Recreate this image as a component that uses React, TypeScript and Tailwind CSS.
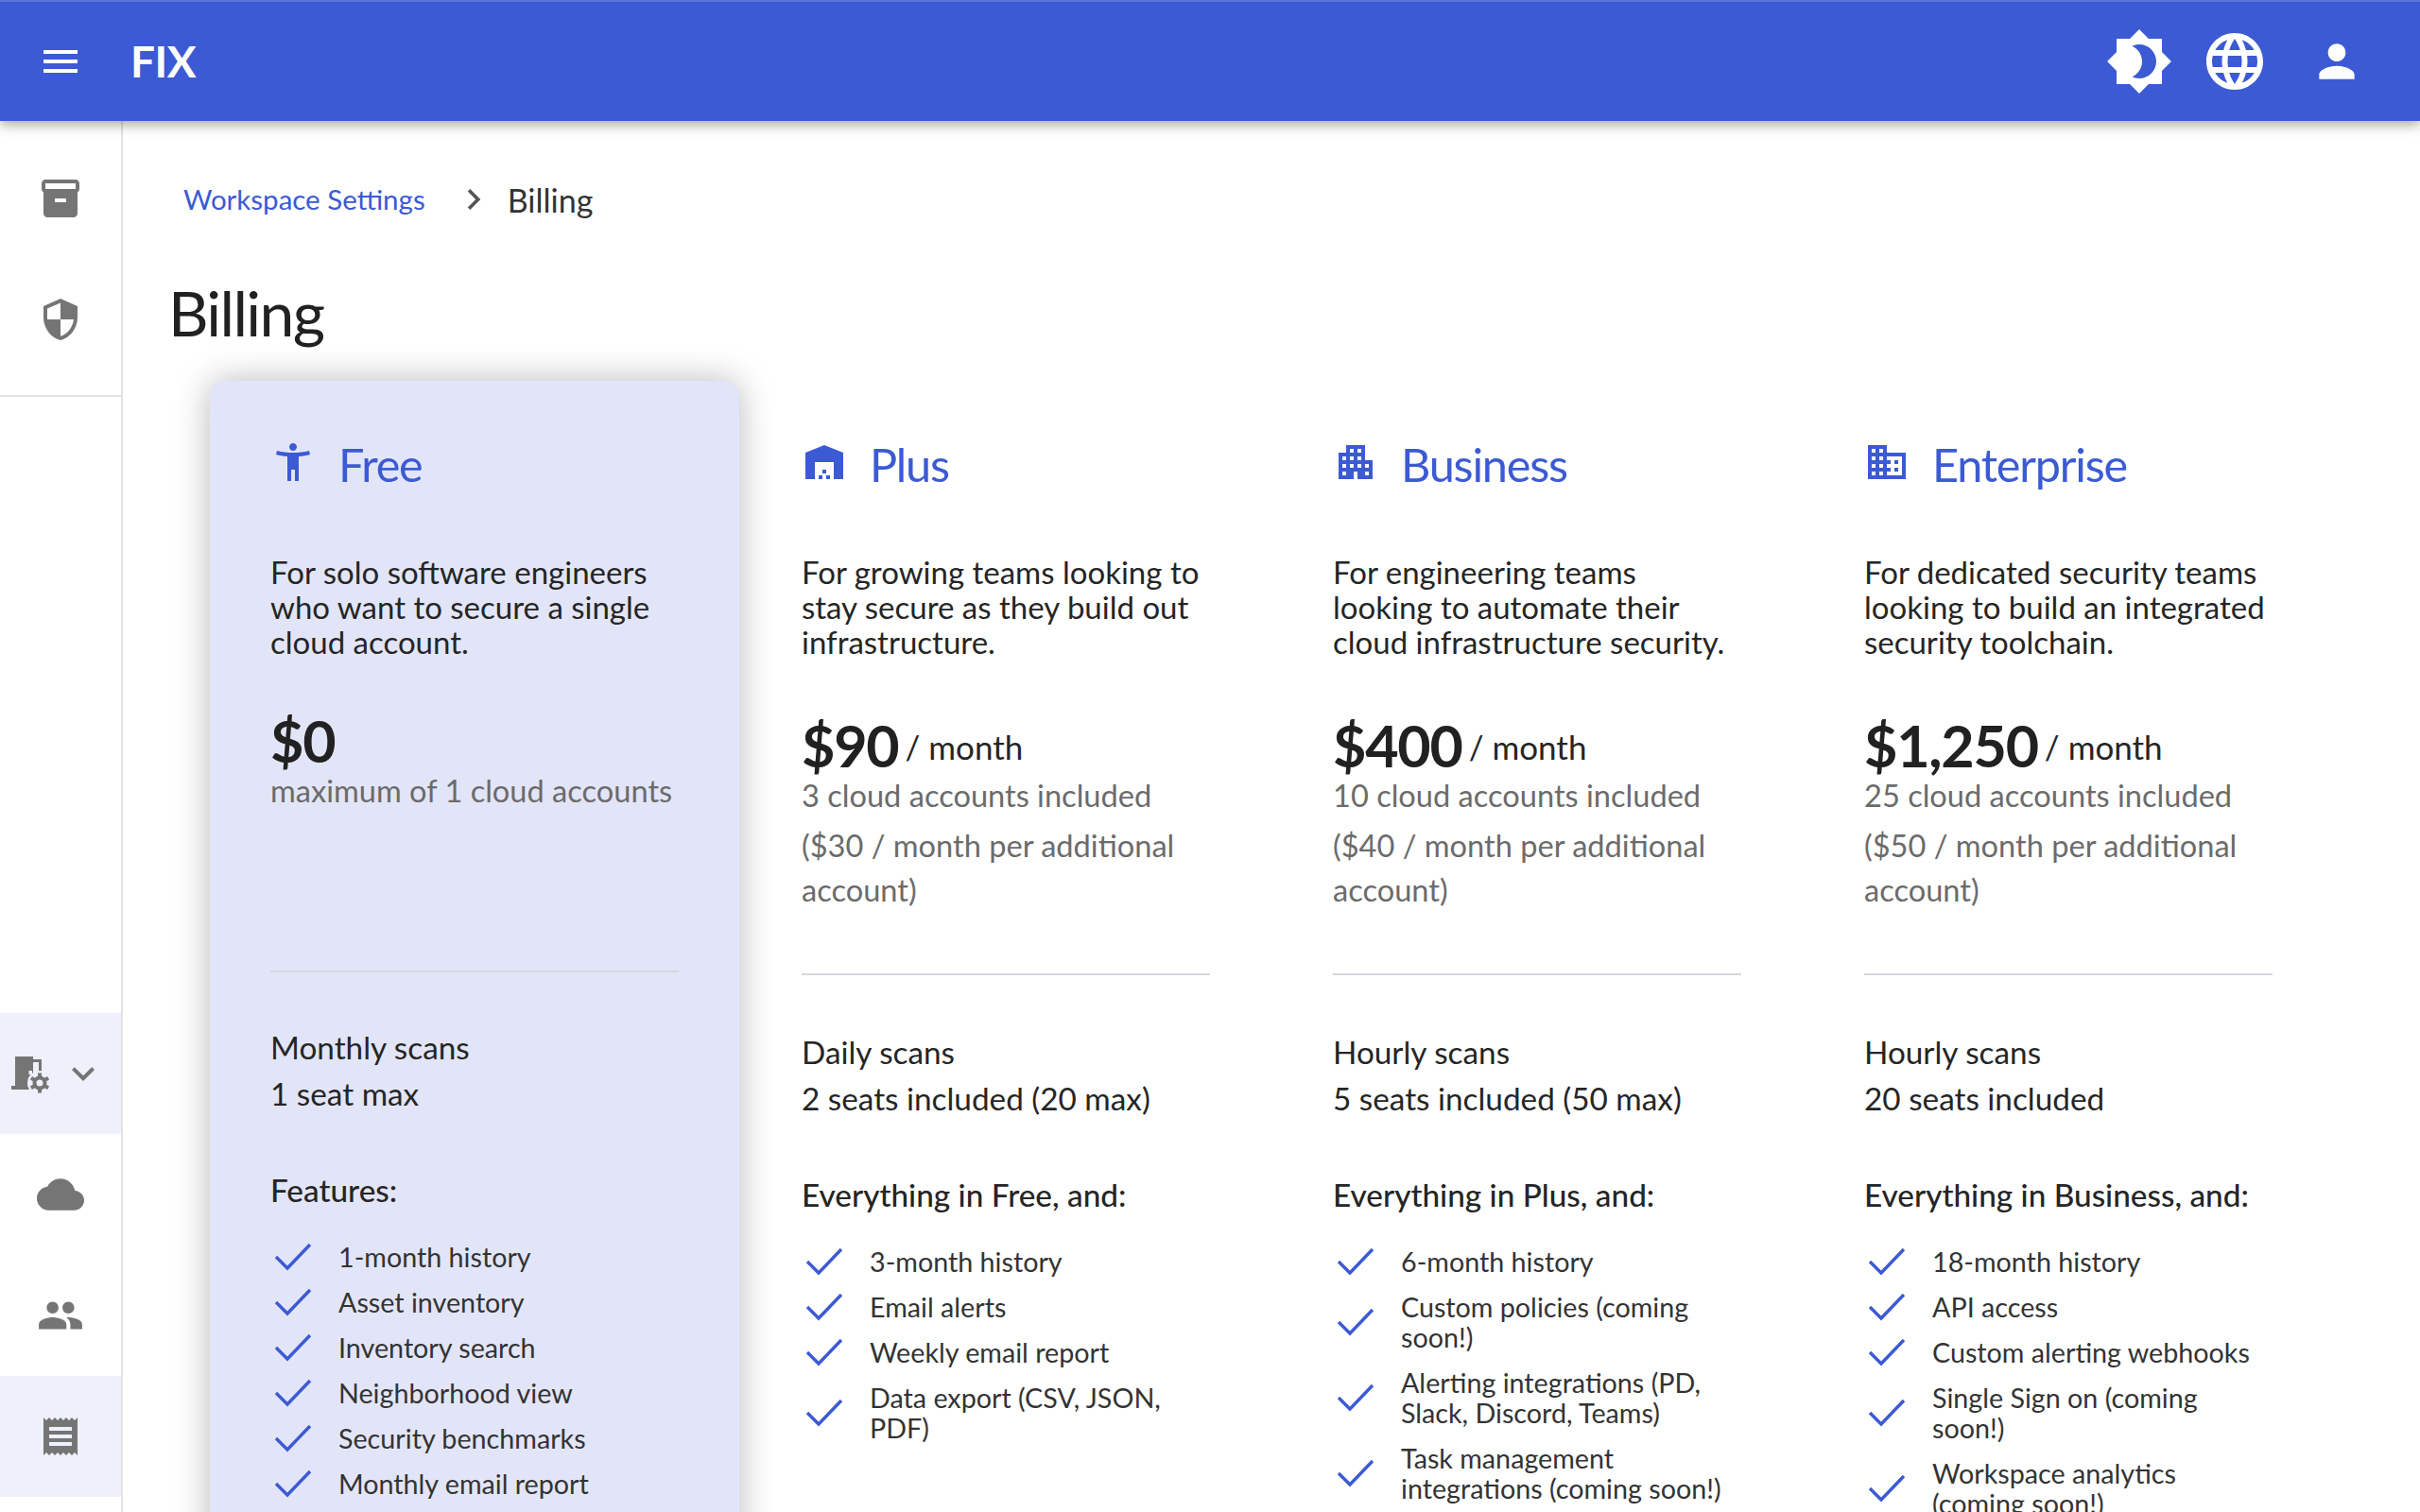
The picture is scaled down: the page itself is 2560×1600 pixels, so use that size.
import {
  MdAccessibilityNew,
  MdApartment,
  MdBrightness4,
  MdBusiness,
  MdChevronRight,
  MdCloud,
  MdInventory2,
  MdKeyboardArrowDown,
  MdLanguage,
  MdMenu,
  MdPeople,
  MdPerson,
  MdReceipt,
  MdSecurity,
  MdWarehouse,
} from 'react-icons/md';

const plans = [
  {
    name: 'Free',
    Icon: MdAccessibilityNew,
    description: 'For solo software engineers who want to secure a single cloud account.',
    price: '$0',
    perMonth: false,
    accounts: 'maximum of 1 cloud accounts',
    extra: '',
    scans: 'Monthly scans',
    seats: '1 seat max',
    featuresTitle: 'Features:',
    features: [
      '1-month history',
      'Asset inventory',
      'Inventory search',
      'Neighborhood view',
      'Security benchmarks',
      'Monthly email report',
    ],
  },
  {
    name: 'Plus',
    Icon: MdWarehouse,
    description: 'For growing teams looking to stay secure as they build out infrastructure.',
    price: '$90',
    perMonth: true,
    accounts: '3 cloud accounts included',
    extra: '($30 / month per additional account)',
    scans: 'Daily scans',
    seats: '2 seats included (20 max)',
    featuresTitle: 'Everything in Free, and:',
    features: ['3-month history', 'Email alerts', 'Weekly email report', 'Data export (CSV, JSON, PDF)'],
  },
  {
    name: 'Business',
    Icon: MdApartment,
    description: 'For engineering teams looking to automate their cloud infrastructure security.',
    price: '$400',
    perMonth: true,
    accounts: '10 cloud accounts included',
    extra: '($40 / month per additional account)',
    scans: 'Hourly scans',
    seats: '5 seats included (50 max)',
    featuresTitle: 'Everything in Plus, and:',
    features: [
      '6-month history',
      'Custom policies (coming soon!)',
      'Alerting integrations (PD, Slack, Discord, Teams)',
      'Task management integrations (coming soon!)',
    ],
  },
  {
    name: 'Enterprise',
    Icon: MdBusiness,
    description: 'For dedicated security teams looking to build an integrated security toolchain.',
    price: '$1,250',
    perMonth: true,
    accounts: '25 cloud accounts included',
    extra: '($50 / month per additional account)',
    scans: 'Hourly scans',
    seats: '20 seats included',
    featuresTitle: 'Everything in Business, and:',
    features: [
      '18-month history',
      'API access',
      'Custom alerting webhooks',
      'Single Sign on (coming soon!)',
      'Workspace analytics (coming soon!)',
    ],
  },
];

function CheckMark() {
  return (
    <svg viewBox="0 0 40 30" className="w-10 h-[30px] shrink-0 mx-1" fill="none" stroke="#3c5ad3" strokeWidth="3.4">
      <path d="M2 15 L14 27 L38 2" />
    </svg>
  );
}

function WorkspaceIcon() {
  return (
    <svg viewBox="0 0 48 48" className="w-12 h-12 shrink-0" fill="#757575">
      {/* building */}
      <path d="M4 41 V37 H8 V6 H27 V9 H36 V22 H33 V12 H27 V41 Z" />
      <rect x="22.5" y="21" width="3.5" height="4" fill="#eef0fb" />
      {/* gear */}
      <circle cx="34" cy="34" r="13" fill="#eef0fb" />
      <circle cx="34" cy="34" r="5.5" fill="none" stroke="#757575" strokeWidth="4" />
      <rect x="32" y="23.5" width="4" height="4" />
      <rect x="32" y="23.5" width="4" height="4" transform="rotate(60 34 34)" />
      <rect x="32" y="23.5" width="4" height="4" transform="rotate(120 34 34)" />
      <rect x="32" y="23.5" width="4" height="4" transform="rotate(180 34 34)" />
      <rect x="32" y="23.5" width="4" height="4" transform="rotate(240 34 34)" />
      <rect x="32" y="23.5" width="4" height="4" transform="rotate(300 34 34)" />
    </svg>
  );
}

function PlanColumn({ plan, active }: { plan: (typeof plans)[number]; active: boolean }) {
  const { Icon } = plan;
  return (
    <div
      className={
        active
          ? 'relative w-[560px] mr-0.5 shrink-0 px-16 pt-16 pb-10 bg-[#e2e5f8] rounded-2xl shadow-[0_0_36px_rgba(0,0,0,0.28)]'
          : 'w-[562px] shrink-0 pl-16 pr-[66px] pt-16 pb-10'
      }
    >
      <div className="flex items-center gap-6 h-12 text-[#3c5ad3]">
        <Icon className="text-[48px] shrink-0 -mt-1" />
        <span className="text-[48.6px] leading-none tracking-[-0.025em]">{plan.name}</span>
      </div>
      <p className="mt-[72px] h-[111px] max-w-[428px] text-[33px] leading-[37px] text-[#252525]">{plan.description}</p>
      <div className={active ? 'mt-[47px] flex items-baseline gap-[7px] h-[68px]' : 'mt-[52px] flex items-baseline gap-[7px] h-[68px]'}>
        <span className="text-[61px] leading-[78px] font-bold tracking-[-0.02em] text-[#212121]">{plan.price}</span>
        {plan.perMonth && <span className="text-[35px] leading-none text-[#252525] -translate-y-[8px]">/ month</span>}
      </div>
      <div className={active ? 'h-[150px] text-[#6b6b6b] text-[32.6px]' : 'h-[148px] text-[#6b6b6b] text-[32.6px]'}>
        <p className="leading-[48px]">{plan.accounts}</p>
        {plan.extra && <p className="mt-[5px] leading-[47px]">{plan.extra}</p>}
      </div>
      <div className="mt-[64px] h-0.5 bg-[#d5d7de]" />
      <div className={active ? 'mt-[55px] text-[33.3px] leading-[49px] text-[#252525]' : 'mt-[57px] text-[33.3px] leading-[49px] text-[#252525]'}>
        <p>{plan.scans}</p>
        <p>{plan.seats}</p>
      </div>
      <p className="mt-[57px] text-[33.3px] leading-10 font-medium text-[#252525]">{plan.featuresTitle}</p>
      <ul className="mt-[35px] flex flex-col gap-[16px] text-[28.7px] leading-[32px] text-[#333333]">
        {plan.features.map((feature) => (
          <li key={feature} className="flex items-center gap-6">
            <CheckMark />
            <span className="max-w-[350px]">{feature}</span>
          </li>
        ))}
      </ul>
    </div>
  );
}

export default function App() {
  return (
    <div className="h-screen overflow-hidden flex flex-col bg-white font-['Lato','Noto_Sans',sans-serif]">
      <header className="relative z-20 h-32 shrink-0 flex items-center bg-[#3c5ad3] border-t-2 border-[#5a75dc] text-white shadow-[0_4px_12px_rgba(0,0,0,0.35)]">
        <MdMenu className="text-[48px] ml-10" />
        <span className="ml-[50px] text-[46px] font-bold tracking-[-0.01em] -mt-0.5">FIX</span>
        <div className="ml-auto flex items-center mr-[60px]">
          <MdBrightness4 className="text-[72px]" />
          <MdLanguage className="text-[72px] ml-[29px]" />
          <MdPerson className="text-[56px] ml-[44px]" />
        </div>
      </header>

      <div className="flex flex-1 min-h-0">
        <aside className="w-[130px] shrink-0 flex flex-col border-r-2 border-[#e2e2e2] text-[#757575] pb-4">
          <div className="mt-[18px] h-32 flex items-center justify-center">
            <MdInventory2 className="text-[48px]" />
          </div>
          <div className="h-32 flex items-center justify-center">
            <MdSecurity className="text-[48px]" />
          </div>
          <div className="mt-4 h-0.5 bg-[#e2e2e2]" />
          <div className="mt-auto h-32 flex items-center bg-[#eef0fb] pl-2">
            <WorkspaceIcon />
            <MdKeyboardArrowDown className="text-[48px] ml-2 shrink-0" />
          </div>
          <div className="h-32 flex items-center justify-center">
            <MdCloud className="text-[50px]" />
          </div>
          <div className="h-32 flex items-center justify-center">
            <MdPeople className="text-[50px]" />
          </div>
          <div className="h-32 flex items-center justify-center bg-[#eef0fb]">
            <MdReceipt className="text-[48px]" />
          </div>
        </aside>

        <main className="flex-1 min-w-0 pl-12">
          <nav className="mt-[61px] ml-4 flex items-center h-11 text-[29.5px]">
            <span className="text-[#3c5ad3]">Workspace Settings</span>
            <MdChevronRight className="text-[44px] text-[#555555] ml-[29px]" />
            <span className="ml-[14px] text-[34px] text-[#333333]">Billing</span>
          </nav>
          <h1 className="mt-[62px] h-[72px] text-[66px] leading-[72px] tracking-[-0.025em] text-[#212121]">Billing</h1>
          <div className="mt-[36px] ml-[44px] flex">
            {plans.map((plan, i) => (
              <PlanColumn key={plan.name} plan={plan} active={i === 0} />
            ))}
          </div>
        </main>
      </div>
    </div>
  );
}
